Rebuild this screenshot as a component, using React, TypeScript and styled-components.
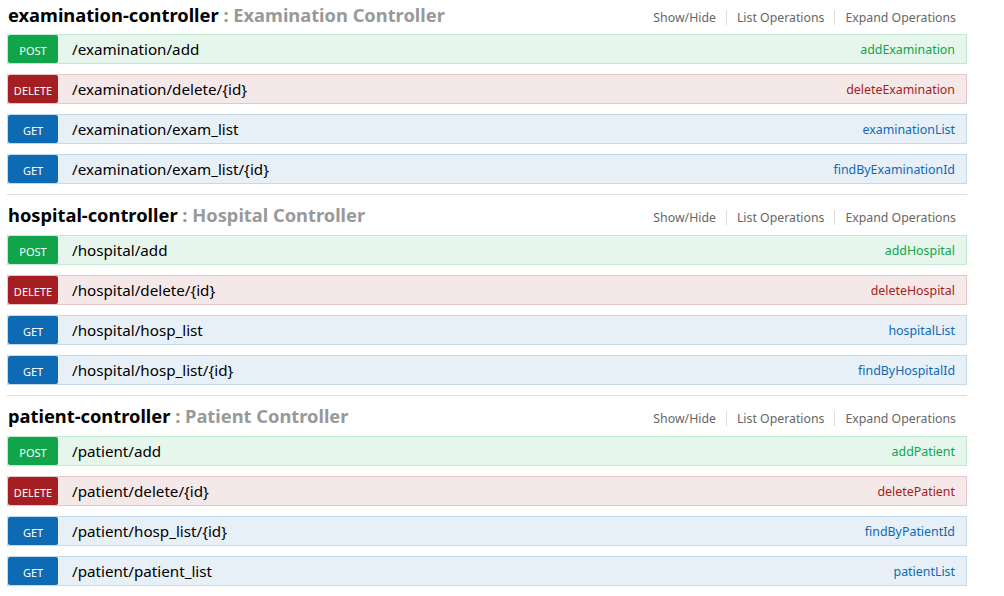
import React from "react";
import styled, { createGlobalStyle } from "styled-components";

type Method = "get" | "post" | "delete";

interface Operation {
  method: Method;
  path: string;
  nickname: string;
}

interface Resource {
  name: string;
  description: string;
  operations: Operation[];
}

const palette: Record<Method, { bg: string; border: string; main: string }> = {
  post: { bg: "#e7f6ec", border: "#c3e8d1", main: "#10a54a" },
  delete: { bg: "#f5e8e8", border: "#e8c6c7", main: "#a41e22" },
  get: { bg: "#e7f0f7", border: "#c3d9ec", main: "#0f6ab4" },
};

const resources: Resource[] = [
  {
    name: "examination-controller",
    description: "Examination Controller",
    operations: [
      { method: "post", path: "/examination/add", nickname: "addExamination" },
      { method: "delete", path: "/examination/delete/{id}", nickname: "deleteExamination" },
      { method: "get", path: "/examination/exam_list", nickname: "examinationList" },
      { method: "get", path: "/examination/exam_list/{id}", nickname: "findByExaminationId" },
    ],
  },
  {
    name: "hospital-controller",
    description: "Hospital Controller",
    operations: [
      { method: "post", path: "/hospital/add", nickname: "addHospital" },
      { method: "delete", path: "/hospital/delete/{id}", nickname: "deleteHospital" },
      { method: "get", path: "/hospital/hosp_list", nickname: "hospitalList" },
      { method: "get", path: "/hospital/hosp_list/{id}", nickname: "findByHospitalId" },
    ],
  },
  {
    name: "patient-controller",
    description: "Patient Controller",
    operations: [
      { method: "post", path: "/patient/add", nickname: "addPatient" },
      { method: "delete", path: "/patient/delete/{id}", nickname: "deletePatient" },
      { method: "get", path: "/patient/hosp_list/{id}", nickname: "findByPatientId" },
      { method: "get", path: "/patient/patient_list", nickname: "patientList" },
    ],
  },
];

const GlobalStyle = createGlobalStyle`
  body {
    margin: 0;
    background: #fff;
    font-family: "Noto Sans", "Open Sans", sans-serif;
  }
`;

const Wrap = styled.div`
  width: 960px;
  padding-left: 7px;
`;

const Section = styled.section<{ $first?: boolean }>`
  border-top: ${(p) => (p.$first ? "none" : "1px solid #ddd")};
`;

const Heading = styled.div<{ $first?: boolean }>`
  height: ${(p) => (p.$first ? "30px" : "40px")};
  padding-bottom: ${(p) => (p.$first ? "4px" : "0")};
  display: flex;
  align-items: center;
  justify-content: space-between;
`;

const Title = styled.h2`
  margin: 0 0 2px 1px;
  font-size: 18.3px;
  font-weight: 700;
  color: #000;
`;

const Desc = styled.span`
  color: #999;
`;

const Options = styled.ul`
  display: flex;
  list-style: none;
  margin: 4px 0 0;
  padding: 0 11px 0 0;
`;

const Option = styled.li`
  font-size: 12.3px;
  color: #666;
  padding: 0 10px;
  line-height: 15px;
  border-left: 1px solid #ddd;

  &:first-child {
    border-left: none;
  }

  &:last-child {
    padding-right: 0;
  }
`;

const OpRow = styled.div<{ $m: Method }>`
  height: 28px;
  margin-bottom: 10px;
  display: flex;
  align-items: center;
  background: ${(p) => palette[p.$m].bg};
  border: 1px solid ${(p) => palette[p.$m].border};
`;

const Badge = styled.span<{ $m: Method }>`
  width: 50px;
  height: 28px;
  flex: none;
  display: flex;
  align-items: center;
  justify-content: center;
  padding-top: 2px;
  box-sizing: border-box;
  border-radius: 2px;
  background: ${(p) => palette[p.$m].main};
  color: #fff;
  font-size: 11px;
  text-transform: uppercase;
`;

const Path = styled.span`
  flex: 1;
  padding-left: 14px;
  font-size: 15.2px;
  color: #000;
`;

const Nick = styled.span<{ $m: Method }>`
  padding-right: 11px;
  font-size: 12.4px;
  color: ${(p) => palette[p.$m].main};
`;

export default function App() {
  return (
    <>
      <GlobalStyle />
      <Wrap>
        {resources.map((r, i) => (
          <Section key={r.name} $first={i === 0}>
            <Heading $first={i === 0}>
              <Title>
                {r.name} <Desc>: {r.description}</Desc>
              </Title>
              <Options>
                <Option>Show/Hide</Option>
                <Option>List Operations</Option>
                <Option>Expand Operations</Option>
              </Options>
            </Heading>
            {r.operations.map((op) => (
              <OpRow key={op.method + op.path} $m={op.method}>
                <Badge $m={op.method}>{op.method}</Badge>
                <Path>{op.path}</Path>
                <Nick $m={op.method}>{op.nickname}</Nick>
              </OpRow>
            ))}
          </Section>
        ))}
      </Wrap>
    </>
  );
}
